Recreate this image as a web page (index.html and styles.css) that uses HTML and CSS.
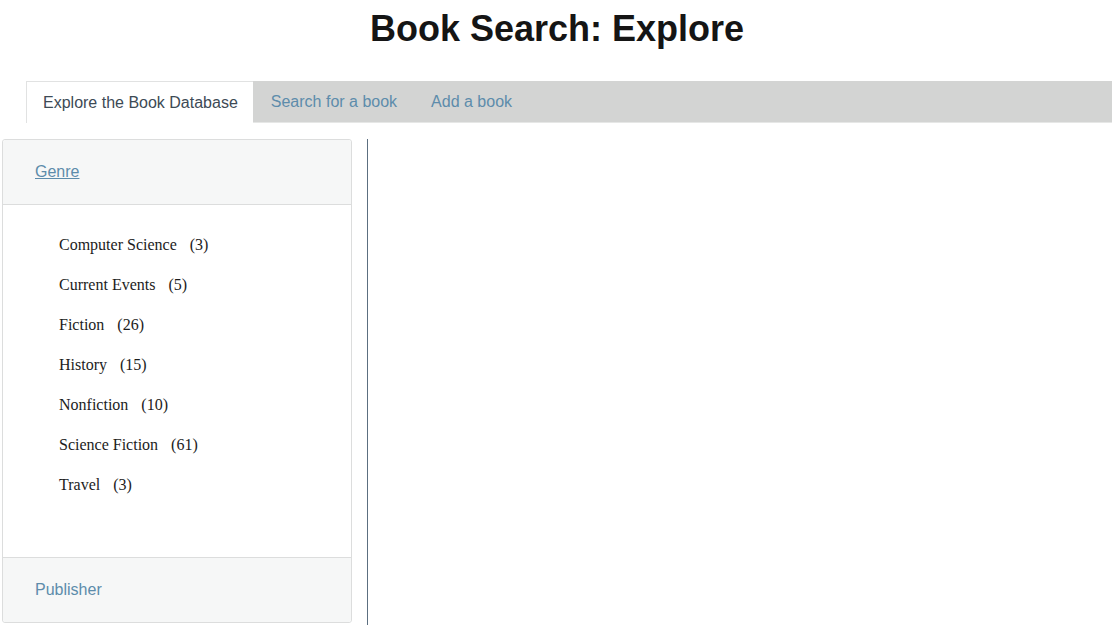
FILE: index.html
```html
<!DOCTYPE html>
<html>
<head>
<meta charset="utf-8">
<title>Book Search: Explore</title>
<link rel="stylesheet" href="styles.css">
</head>
<body>
<h1 class="title">Book Search: Explore</h1>
<div class="tabs">
  <div class="tab tab-active">Explore the Book Database</div>
  <div class="tab-rest">
    <a class="tab" href="#">Search for a book</a>
    <a class="tab" href="#">Add a book</a>
  </div>
</div>
<div class="main">
  <div class="accordion">
    <div class="acc-header acc-header-open"><a href="#" class="acc-link">Genre</a></div>
    <div class="acc-content">
      <ul class="genres">
        <li class="genre"><span>Computer Science</span><span class="count">(3)</span></li>
        <li class="genre"><span>Current Events</span><span class="count">(5)</span></li>
        <li class="genre"><span>Fiction</span><span class="count">(26)</span></li>
        <li class="genre"><span>History</span><span class="count">(15)</span></li>
        <li class="genre"><span>Nonfiction</span><span class="count">(10)</span></li>
        <li class="genre"><span>Science Fiction</span><span class="count">(61)</span></li>
        <li class="genre"><span>Travel</span><span class="count">(3)</span></li>
      </ul>
    </div>
    <div class="acc-header acc-header-last"><span class="acc-label">Publisher</span></div>
  </div>
  <div class="results"></div>
</div>
</body>
</html>
```
FILE: styles.css
```css
html, body {
  margin: 0;
  padding: 0;
  height: 100%;
}
body {
  padding: 0 2px;
  font-family: "Liberation Sans", Arial, sans-serif;
  font-size: 16px;
  color: #222;
  display: flex;
  flex-direction: column;
  overflow: hidden;
}
.title {
  margin: 8px 0 31px;
  font-size: 36px;
  line-height: 42px;
  font-weight: bold;
  text-align: center;
  color: #151515;
}
.tabs {
  display: flex;
  margin-left: 24px;
  height: 42px;
}
.tab {
  display: flex;
  align-items: center;
  padding: 0 17px;
  font-size: 16px;
  color: #5d8cab;
  text-decoration: none;
}
.tab-active {
  background: #fff;
  color: #3d4a55;
  border-top: 1px solid #e1e2e2;
  border-left: 1px solid #e1e2e2;
  padding-left: 16px;
  padding-right: 15px;
  height: 41px;
}
.tab-rest {
  flex: 1;
  display: flex;
  padding-left: 1px;
  background: #d3d4d3;
  border-bottom: 1px solid #e6e7e6;
  height: 41px;
}
.main {
  flex: 1;
  display: flex;
  gap: 15px;
  margin-top: 16px;
  align-items: flex-start;
}
.accordion {
  width: 348px;
  border: 1px solid #dcdddd;
  border-radius: 3px;
  display: flex;
  flex-direction: column;
}
.acc-header {
  height: 64px;
  display: flex;
  align-items: center;
  padding-left: 32px;
  background: #f6f7f7;
}
.acc-header-open {
  border-bottom: 1px solid #dcdddd;
  border-radius: 3px 3px 0 0;
}
.acc-header-last {
  border-top: 1px solid #dcdddd;
  border-radius: 0 0 3px 3px;
}
.acc-link {
  color: #5d8cab;
  text-decoration: underline;
}
.acc-label {
  color: #5d8cab;
}
.acc-content {
  padding: 20px 0 52px;
}
.genres {
  list-style: none;
  margin: 0;
  padding: 0 0 0 56px;
}
.genre {
  height: 40px;
  display: flex;
  align-items: center;
  gap: 13px;
  font-family: "Liberation Serif", "Times New Roman", serif;
  font-size: 16px;
  color: #1c1c1c;
}
.results {
  flex: 1;
  align-self: stretch;
  border-left: 1px solid #5c6f80;
}
```
